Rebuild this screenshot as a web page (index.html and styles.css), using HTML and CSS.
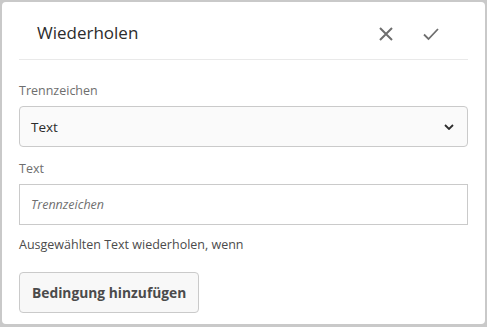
FILE: index.html
```html
<!DOCTYPE html>
<html lang="de">
<head>
<meta charset="utf-8">
<link rel="stylesheet" href="styles.css">
</head>
<body>
<div class="card">
  <div class="header">
    <div class="title">Wiederholen</div>
    <div class="actions">
      <svg class="icon" width="16" height="16" viewBox="0 0 16 16"><path d="M2 2 L14 14 M14 2 L2 14" stroke="#6e6e6e" stroke-width="2" fill="none"/></svg>
      <svg class="icon" width="18" height="16" viewBox="0 0 18 16"><path d="M2 8.5 L6.5 13 L16 3" stroke="#6e6e6e" stroke-width="1.8" fill="none"/></svg>
    </div>
  </div>
  <div class="field">
    <div class="label">Trennzeichen</div>
    <div class="select">
      <span>Text</span>
      <svg width="10" height="6" viewBox="0 0 10 6"><path d="M1 1 L5 5 L9 1" stroke="#2c2c2c" stroke-width="1.8" fill="none"/></svg>
    </div>
  </div>
  <div class="field">
    <div class="label">Text</div>
    <div class="input"><span class="placeholder">Trennzeichen</span></div>
  </div>
  <div class="note">Ausgewählten Text wiederholen, wenn</div>
  <div class="btn">Bedingung hinzufügen</div>
</div>
</body>
</html>
```
FILE: styles.css
```css
html, body { margin: 0; padding: 0; }
body {
  background: #c9c9c9;
  width: 487px;
  height: 327px;
  padding: 2px 2px 3px 2px;
  box-sizing: border-box;
  font-family: "Open Sans", "Noto Sans", sans-serif;
}
.card {
  background: #fff;
  border-radius: 4px;
  height: 100%;
  box-sizing: border-box;
  padding: 0 17px;
}
.header {
  height: 57px;
  border-bottom: 1px solid #e9e9e9;
  display: flex;
  align-items: center;
  padding: 0 28px 0 18px;
}
.title {
  flex: 1;
  font-size: 17px;
  color: #2c2c2c;
  padding-top: 3px;
}
.actions { display: flex; gap: 28px; align-items: center; padding-top: 6px; }
.icon { display: block; }
.field { margin-top: 22px; }
.field + .field { margin-top: 13px; }
.label { font-size: 12.5px; color: #6e6e6e; line-height: 17px; margin-bottom: 7px; }
.select {
  height: 41px;
  box-sizing: border-box;
  border: 1px solid #cacaca;
  border-radius: 4px;
  background: #fafafa;
  display: flex;
  align-items: center;
  justify-content: space-between;
  padding: 0 13px 0 11px;
  font-size: 13.5px;
  color: #2c2c2c;
}
.input {
  height: 41px;
  box-sizing: border-box;
  border: 1px solid #cacaca;
  display: flex;
  align-items: center;
  padding: 0 11px;
}
.placeholder { font-style: italic; font-size: 12.5px; color: #707070; }
.note { margin-top: 11px; font-size: 12.5px; color: #4b4b4b; line-height: 17px; }
.btn {
  margin-top: 19px;
  display: inline-flex;
  align-items: center;
  height: 41px;
  box-sizing: border-box;
  padding: 0 12px;
  border: 1px solid #cacaca;
  border-radius: 4px;
  background: #f8f8f8;
  font-weight: 700;
  font-size: 13.8px;
  color: #4b4b4b;
}
```
